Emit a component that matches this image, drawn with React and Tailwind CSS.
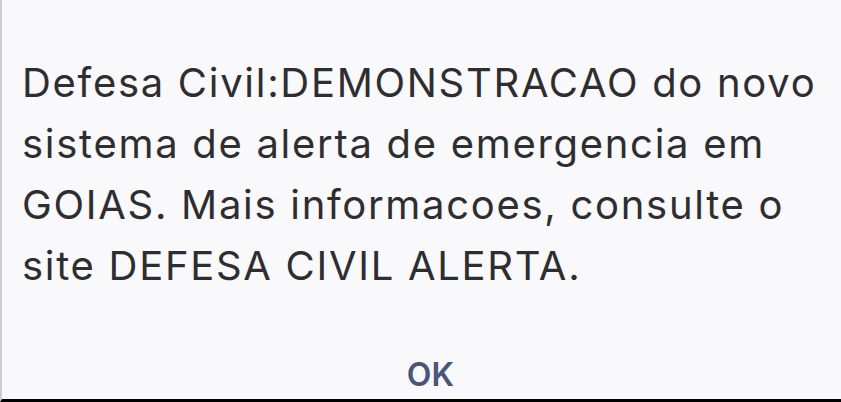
export default function App() {
  const lines = [
    "Defesa Civil:DEMONSTRACAO do novo",
    "sistema de alerta de emergencia em",
    "GOIAS. Mais informacoes, consulte o",
    "site DEFESA CIVIL ALERTA.",
  ];
  return (
    <div
      className="w-[841px] h-[402px] bg-[#f9f9fc] border-l-2 border-l-[#cdcdd0] border-b-[3px] border-b-black flex flex-col overflow-hidden"
      style={{ fontFamily: "Inter, 'Noto Sans', sans-serif" }}
    >
      <div className="pt-[52px] pl-[20px] text-[40px] leading-[61px] tracking-[1.7px] text-[#2e2e30] whitespace-nowrap">
        {lines.map((l) => (
          <div key={l}>{l}</div>
        ))}
      </div>
      <div className="mt-[59px] flex justify-center pl-[18px]">
        <span className="text-[32px] leading-[40px] font-semibold tracking-[0.3px] text-[#4a5579]">OK</span>
      </div>
    </div>
  );
}
